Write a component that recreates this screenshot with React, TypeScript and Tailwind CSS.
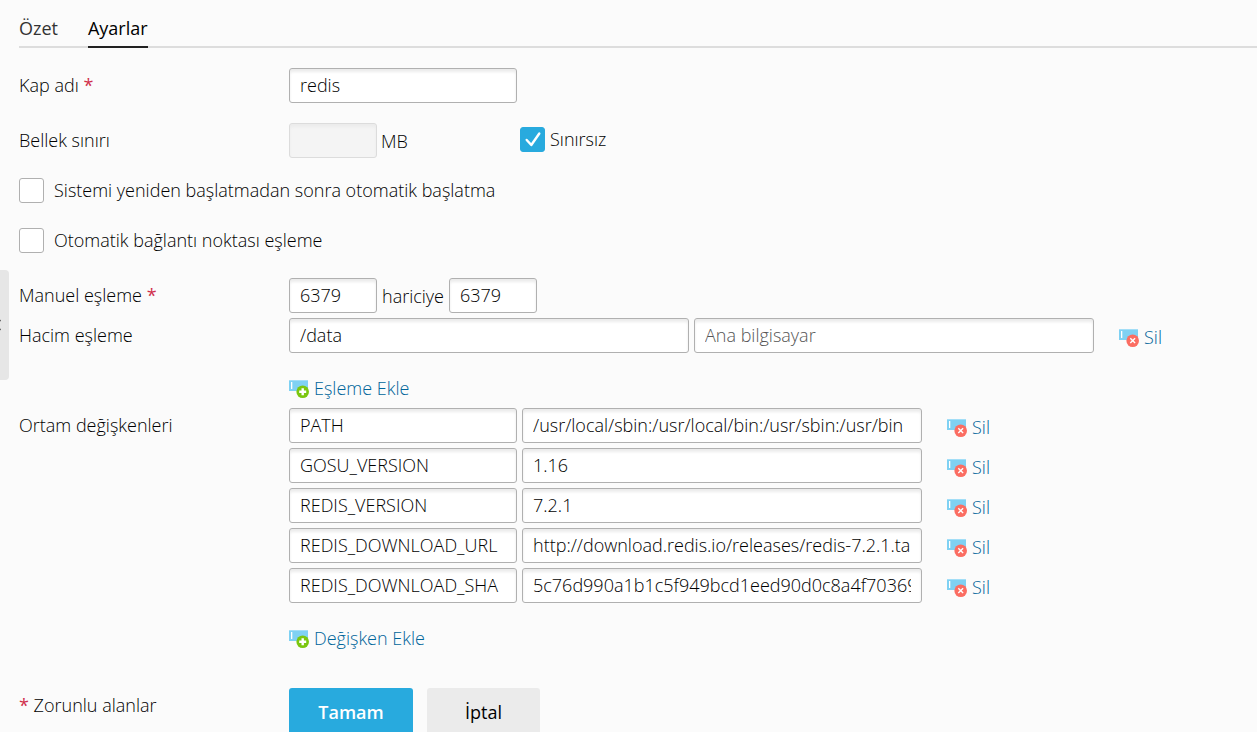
import React, { useState } from 'react';

interface EnvVariable {
  name: string;
  value: string;
}

interface FieldProps extends React.InputHTMLAttributes<HTMLInputElement> {
  width: string;
}

interface RowProps {
  label: string;
  htmlFor?: string;
  required?: boolean;
  className?: string;
  children: React.ReactNode;
}

const initialVariables: EnvVariable[] = [
  { name: 'PATH', value: '/usr/local/sbin:/usr/local/bin:/usr/sbin:/usr/bin' },
  { name: 'GOSU_VERSION', value: '1.16' },
  { name: 'REDIS_VERSION', value: '7.2.1' },
  { name: 'REDIS_DOWNLOAD_URL', value: 'http://download.redis.io/releases/redis-7.2.1.tar.gz' },
  { name: 'REDIS_DOWNLOAD_SHA', value: '5c76d990a1b1c5f949bcd1eed90d0c8a4f70369' },
];

const Field: React.FC<FieldProps> = ({ width, ...props }) => (
  <input
    {...props}
    className={`${width} h-[35px] shrink-0 px-2.5 pb-0.5 rounded-[3px] border border-[#b0b0b0] bg-white shadow-[inset_0_3px_3px_#ececec] placeholder:text-[#555555] disabled:border-[#dcdcdc] disabled:bg-[#f4f4f4] focus:outline-none focus:border-[#28aade]`}
  />
);

const Row: React.FC<RowProps> = ({ label, htmlFor, required, className = '', children }) => (
  <div className={`flex items-start ${className}`}>
    <label htmlFor={htmlFor} className="w-[270px] shrink-0 leading-[35px]">
      {label}
      {required && <span className="font-normal text-[#d02f4b]"> *</span>}
    </label>
    {children}
  </div>
);

const RowIcon: React.FC<{ type: 'add' | 'remove' }> = ({ type }) => (
  <svg width="20" height="21" viewBox="0 0 20 21" aria-hidden="true">
    <rect x="0" y="2" width="19" height="11" fill="#7fd1f3" />
    <rect x="0" y="2" width="19" height="1" fill="#a3def7" />
    <rect x="2" y="4" width="1.3" height="7" fill="#ffffff" />
    <circle cx="13.7" cy="13.7" r="6.3" fill={type === 'add' ? '#7bc70f' : '#fb6d62'} />
    {type === 'add' ? (
      <path d="M13.7 10.2v7M10.2 13.7h7" stroke="#ffffff" strokeWidth="2.4" />
    ) : (
      <path d="M11.3 11.3l4.8 4.8M16.1 11.3l-4.8 4.8" stroke="#ffffff" strokeWidth="1.4" />
    )}
  </svg>
);

const LinkButton: React.FC<{ type: 'add' | 'remove'; text: string; onClick?: () => void }> = ({
  type,
  text,
  onClick,
}) => (
  <button type="button" onClick={onClick} className="flex items-center gap-[5px] text-[#00659a] cursor-pointer">
    <RowIcon type={type} />
    {text}
  </button>
);

const CheckBox: React.FC<{
  id: string;
  label: string;
  checked: boolean;
  onChange: (checked: boolean) => void;
  gap: string;
}> = ({ id, label, checked, onChange, gap }) => (
  <div className={`flex items-center ${gap}`}>
    <span className="grid size-[25px]">
      <input
        id={id}
        type="checkbox"
        checked={checked}
        onChange={(e) => onChange(e.target.checked)}
        className="appearance-none col-start-1 row-start-1 size-[25px] rounded-[3px] border border-[#b0b0b0] bg-white checked:border-[#28aade] checked:bg-[#28aade]"
      />
      {checked && (
        <svg
          className="col-start-1 row-start-1 pointer-events-none"
          viewBox="0 0 25 25"
          fill="none"
          stroke="#ffffff"
          strokeWidth="2.4"
          strokeLinecap="round"
          strokeLinejoin="round"
        >
          <path d="M6.7 13l4.6 5L19.3 6.5" />
        </svg>
      )}
    </span>
    <label htmlFor={id}>{label}</label>
  </div>
);

const App: React.FC = () => {
  const [unlimited, setUnlimited] = useState(true);
  const [autoStart, setAutoStart] = useState(false);
  const [autoPort, setAutoPort] = useState(false);
  const [variables, setVariables] = useState<EnvVariable[]>(initialVariables);

  const updateVariable = (index: number, change: Partial<EnvVariable>) => {
    setVariables((prev) => prev.map((v, i) => (i === index ? { ...v, ...change } : v)));
  };

  const removeVariable = (index: number) => {
    setVariables((prev) => prev.filter((_, i) => i !== index));
  };

  return (
    <div className="relative h-screen overflow-hidden bg-[#fbfbfb] pl-[19px] font-['Open_Sans',sans-serif] font-light text-[18px] leading-[25px] text-black">
      <button
        type="button"
        aria-label="Paneli daralt"
        className="absolute left-0 top-[270px] w-[9px] h-[110px] rounded-r-[4px] bg-[#e6e6e6]"
      >
        <svg width="9" height="110" viewBox="0 0 9 110" fill="none" stroke="#555555" strokeWidth="1.5">
          <path d="M0.5 50l-4 5l4 5" />
        </svg>
      </button>

      <nav className="flex gap-[30px] h-12 pt-4 border-b-2 border-[#dddddd] font-medium">
        <a href="#ozet" className="h-8 text-[#333333]">
          Özet
        </a>
        <a href="#ayarlar" className="h-8 border-b-2 border-[#222222]">
          Ayarlar
        </a>
      </nav>

      <form onSubmit={(e) => e.preventDefault()}>
        <Row label="Kap adı" htmlFor="name" required className="mt-5">
          <Field id="name" width="w-[228px]" defaultValue="redis" />
        </Row>

        <Row label="Bellek sınırı" htmlFor="memory" className="mt-5">
          <div className="flex items-center gap-1 w-[231px]">
            <Field id="memory" width="w-[88px]" disabled={unlimited} />
            <span className="pt-0.5">MB</span>
          </div>
          <div className="pt-1">
            <CheckBox id="unlimited" label="Sınırsız" checked={unlimited} onChange={setUnlimited} gap="gap-[5px]" />
          </div>
        </Row>

        <div className="flex flex-col gap-[25px] my-5 pb-[5px]">
          <CheckBox
            id="autostart"
            label="Sistemi yeniden başlatmadan sonra otomatik başlatma"
            checked={autoStart}
            onChange={setAutoStart}
            gap="gap-2.5"
          />
          <CheckBox
            id="autoport"
            label="Otomatik bağlantı noktası eşleme"
            checked={autoPort}
            onChange={setAutoPort}
            gap="gap-2.5"
          />
        </div>

        <Row label="Manuel eşleme" htmlFor="inner-port" required>
          <div className="flex items-center gap-[5px]">
            <Field id="inner-port" width="w-[88px]" defaultValue="6379" />
            <label htmlFor="outer-port" className="pt-0.5">
              hariciye
            </label>
            <Field id="outer-port" width="w-[88px]" defaultValue="6379" />
          </div>
        </Row>

        <Row label="Hacim eşleme" htmlFor="container-path" className="mt-[5px]">
          <div>
            <div className="flex gap-[5px]">
              <Field id="container-path" width="w-[400px]" defaultValue="/data" />
              <Field aria-label="Ana bilgisayar" width="w-[400px]" placeholder="Ana bilgisayar" />
              <div className="pl-5 pt-[7px]">
                <LinkButton type="remove" text="Sil" />
              </div>
            </div>
            <div className="mt-[23px]">
              <LinkButton type="add" text="Eşleme Ekle" />
            </div>
          </div>
        </Row>

        <Row label="Ortam değişkenleri" htmlFor="env-0" className="mt-[7px]">
          <div>
            <div className="flex flex-col gap-[5px]">
              {variables.map((variable, index) => (
                <div key={index} className="flex gap-[5px]">
                  <Field
                    id={`env-${index}`}
                    width="w-[228px]"
                    value={variable.name}
                    onChange={(e) => updateVariable(index, { name: e.target.value })}
                  />
                  <Field
                    aria-label={variable.name}
                    width="w-[400px]"
                    value={variable.value}
                    onChange={(e) => updateVariable(index, { value: e.target.value })}
                  />
                  <div className="pl-5 pt-[7px]">
                    <LinkButton type="remove" text="Sil" onClick={() => removeVariable(index)} />
                  </div>
                </div>
              ))}
            </div>
            <div className="mt-[23px]">
              <LinkButton
                type="add"
                text="Değişken Ekle"
                onClick={() => setVariables((prev) => [...prev, { name: '', value: '' }])}
              />
            </div>
          </div>
        </Row>

        <div className="flex items-start mt-[37px] pb-5">
          <p className="w-[270px] shrink-0 leading-[35px]">
            <span className="font-normal text-[#d02f4b]">*</span> Zorunlu alanlar
          </p>
          <div className="flex gap-3.5">
            <button type="submit" className="w-[124px] h-[50px] pb-0.5 rounded-[3px] bg-[#28aade] font-semibold text-white">
              Tamam
            </button>
            <button type="button" className="w-[113px] h-[50px] pb-0.5 rounded-[3px] bg-[#ebebeb] font-medium">
              İptal
            </button>
          </div>
        </div>
      </form>
    </div>
  );
};

export default App;
